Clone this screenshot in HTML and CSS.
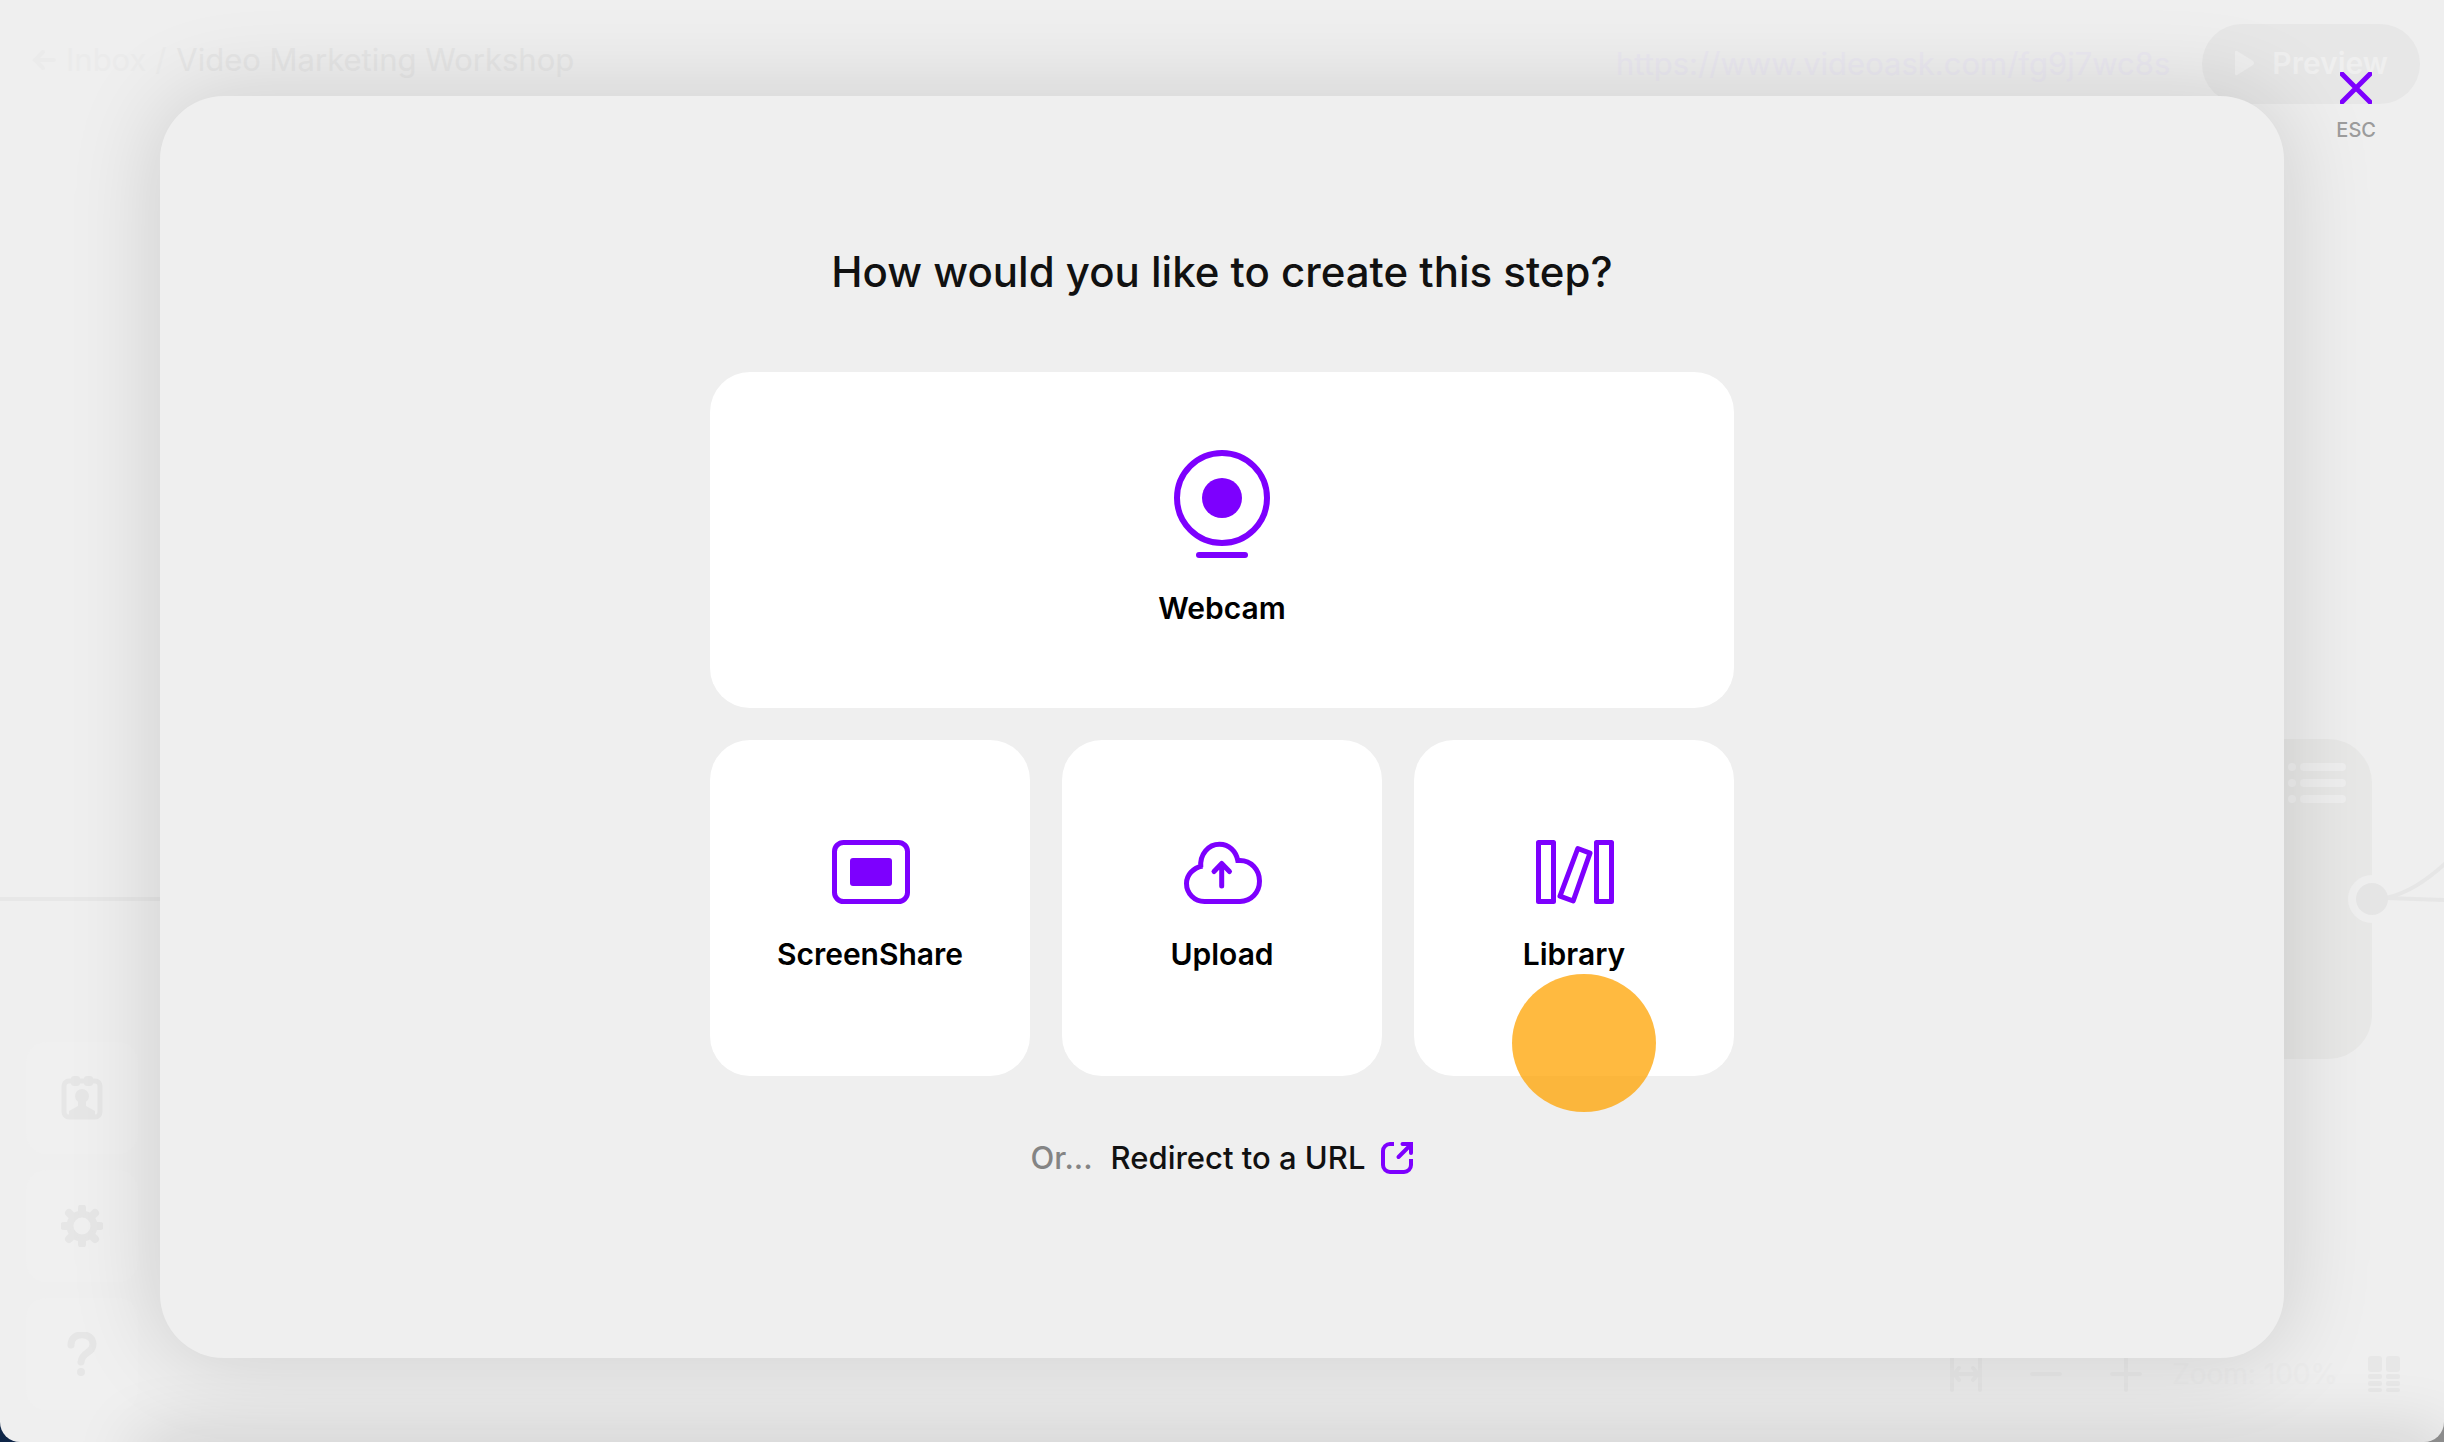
FILE: index.html
```html
<!DOCTYPE html>
<html lang="en">
<head>
    <meta charset="UTF-8">
    <meta name="viewport" content="width=device-width, initial-scale=1.0">
    <title>Video Marketing Workshop</title>
    <link rel="stylesheet" href="styles.css">
</head>
<body>
<div class="window">

    <div class="app">
        <div class="canvas">
            <svg class="wire left" width="160" height="4"><rect width="160" height="4"/></svg>
            <div class="node">
                <svg class="node-list" width="60" height="40" viewBox="0 0 60 40">
                    <circle cx="4" cy="4" r="4"/><rect x="12" y="0" width="46" height="8" rx="4"/>
                    <circle cx="4" cy="20" r="4"/><rect x="12" y="16" width="46" height="8" rx="4"/>
                    <circle cx="4" cy="36" r="4"/><rect x="12" y="32" width="46" height="8" rx="4"/>
                </svg>
            </div>
            <svg class="wire right" width="96" height="80" viewBox="0 0 96 80">
                <circle cx="24" cy="40" r="24" fill="#efefef"/>
                <path d="M38 39C60 34 78 22 100 2M38 39L96 41" fill="none" stroke="#e6e6e6" stroke-width="4"/>
                <circle cx="24" cy="40" r="16" fill="#e5e5e5"/>
            </svg>
        </div>

        <header class="topbar">
            <nav class="crumbs">
                <a href="#inbox" class="back">
                    <svg width="24" height="20" viewBox="0 0 24 20"><path d="M22 10H3M11 2L3 10l8 8"/></svg>
                    Inbox /
                </a>
                <span class="crumb-title">Video Marketing Workshop</span>
            </nav>
            <div class="share">
                <a href="#share" class="share-link">https://www.videoask.com/fg9j7wc8s</a>
                <button class="preview" type="button">
                    <svg width="20" height="26" viewBox="0 0 20 26"><path d="M1 2Q1 0 3 1L19 11Q21 13 19 15L3 25Q1 26 1 24Z"/></svg>
                    Preview
                </button>
            </div>
        </header>

        <div class="bottom">
            <div class="side">
                <button class="tile" type="button" aria-label="Contacts">
                    <svg width="42" height="44" viewBox="0 0 42 44">
                        <rect x="3" y="5" width="36" height="36" rx="5" fill="none" stroke="#e6e6e6" stroke-width="5"/>
                        <rect x="10" y="0" width="9" height="10" rx="3"/><rect x="23" y="0" width="9" height="10" rx="3"/>
                        <circle cx="21" cy="20" r="7"/><path d="M17 24h8v6l9 5v6H8v-6l9-5z"/>
                    </svg>
                </button>
                <button class="tile" type="button" aria-label="Settings">
                    <svg width="42" height="42" viewBox="0 0 42 42">
                        <circle cx="21" cy="21" r="12" fill="none" stroke="#e6e6e6" stroke-width="7"/>
                        <path d="M21 3v5M21 34v5M3 21h5M34 21h5M8 8l4 4M30 30l4 4M8 34l4-4M30 12l4-4" stroke="#e6e6e6" stroke-width="8" stroke-linecap="round" stroke-linejoin="round"/>
                    </svg>
                </button>
                <button class="tile" type="button" aria-label="Help">
                    <svg width="30" height="44" viewBox="0 0 30 44">
                        <path d="M4 13C4 -1 26 0 26 12C26 22 15 19 14 30" fill="none" stroke="#e6e6e6" stroke-width="7" stroke-linecap="round"/>
                        <circle cx="14" cy="40" r="4"/>
                    </svg>
                </button>
            </div>
            <div class="zoombar">
                <button type="button" aria-label="Fit">
                    <svg width="32" height="36" viewBox="0 0 32 36"><path d="M2 2v32M30 2v32M4 18h24M9 12l-5 6 5 6M23 12l5 6-5 6"/></svg>
                </button>
                <button type="button" aria-label="Zoom out">
                    <svg width="32" height="36" viewBox="0 0 32 36"><path d="M2 18h28"/></svg>
                </button>
                <button type="button" aria-label="Zoom in">
                    <svg width="32" height="36" viewBox="0 0 32 36"><path d="M2 18h28M16 2v32"/></svg>
                </button>
                <span class="zoom-value">Zoom: 100%</span>
                <button type="button" aria-label="Layout">
                    <svg class="solid" width="32" height="36" viewBox="0 0 32 36">
                        <rect x="0" y="0" width="14" height="16" rx="3"/><rect x="18" y="0" width="14" height="16" rx="3"/>
                        <rect x="0" y="18" width="14" height="5" rx="2"/><rect x="18" y="18" width="14" height="5" rx="2"/>
                        <rect x="0" y="25" width="14" height="5" rx="2"/><rect x="18" y="25" width="14" height="5" rx="2"/>
                        <rect x="0" y="32" width="14" height="4" rx="2"/><rect x="18" y="32" width="14" height="4" rx="2"/>
                    </svg>
                </button>
            </div>
        </div>
        <div class="edge-shadow"></div>
    </div>

    <div class="overlay">
        <main class="modal" role="dialog" aria-labelledby="modal-title">
            <h1 id="modal-title">How would you like to create this step?</h1>

            <div class="options">
                <button class="option wide" type="button">
                    <svg width="96" height="108" viewBox="0 0 96 108">
                        <circle cx="48" cy="48" r="45" fill="none" stroke="#7d00fe" stroke-width="6"/>
                        <circle cx="48" cy="48" r="20" fill="#7d00fe"/>
                        <path d="M25 105h46" stroke="#7d00fe" stroke-width="6" stroke-linecap="round"/>
                    </svg>
                    Webcam
                </button>
                <button class="option" type="button">
                    <svg width="80" height="64" viewBox="0 0 80 64">
                        <rect x="4.5" y="2.5" width="73" height="59" rx="9" fill="none" stroke="#7d00fe" stroke-width="5"/>
                        <rect x="20" y="18" width="42" height="28" rx="3" fill="#7d00fe"/>
                    </svg>
                    ScreenShare
                </button>
                <button class="option" type="button">
                    <svg width="80" height="64" viewBox="0 0 80 64" fill="none" stroke="#7d00fe" stroke-width="5">
                        <path d="M20.5 26C11 28 4.5 35 4.5 43.5C4.5 53.5 12.5 61.5 22.5 61.5H58C69 61.5 77.5 52.5 77.5 41S69 20.5 58 20.5H55.8C54 11 47 4.2 37.5 4.2C26.5 4.2 17.5 14 18.8 27.5"/>
                        <path d="M39.7 46V23.5M32 31.5L39.7 23.5L47.5 31.5" stroke-linecap="round" stroke-linejoin="round"/>
                    </svg>
                    Upload
                </button>
                <button class="option library" type="button">
                    <svg width="80" height="64" viewBox="0 0 80 64" fill="none" stroke="#7d00fe" stroke-width="5" stroke-linejoin="round">
                        <rect x="4.5" y="2.5" width="15" height="59"/>
                        <path d="M43.8 8.5L56 13.2L39.2 61L26 56.2Z"/>
                        <rect x="62.5" y="2.5" width="15" height="59"/>
                    </svg>
                    Library
                    <span class="pointer"></span>
                </button>
            </div>

            <p class="redirect">
                <span class="or">Or...</span>
                <a href="#redirect">
                    Redirect to a URL
                    <svg width="32" height="32" viewBox="0 0 32 32" fill="none" stroke="#7d00fe" stroke-width="4">
                        <path d="M13 2H9a7 7 0 0 0-7 7v14a7 7 0 0 0 7 7h14a7 7 0 0 0 7-7v-6"/>
                        <path d="M17.5 15L29 3.5M21.5 2H30V11" stroke-linecap="round"/>
                    </svg>
                </a>
            </p>
        </main>

        <button class="close" type="button">
            <svg width="32" height="32" viewBox="0 0 32 32"><path d="M2 2l28 28M30 2L2 30"/></svg>
            ESC
        </button>
    </div>

</div>
</body>
</html>
```

FILE: styles.css
```css
*{
    box-sizing: border-box;
}
body{
    margin: 0;
    background: linear-gradient(90deg, #0e2547 0%, #8c8c8c 100%);
    font-family: Inter, "Liberation Sans", sans-serif;
}
button{
    border: 0;
    padding: 0;
    background: none;
    font: inherit;
    color: inherit;
    cursor: pointer;
}
a{
    color: inherit;
    text-decoration: none;
}
svg{
    display: block;
    flex: none;
}

.window{
    position: relative;
    min-height: 100vh;
    display: grid;
    overflow: hidden;
    border-radius: 0 0 20px 20px;
    background: #efefef;
}
.app, .overlay{
    grid-area: 1 / 1;
}

/* editor behind the dialog */
.app{
    position: relative;
    display: flex;
    flex-direction: column;
    justify-content: space-between;
}
.topbar{
    display: flex;
    justify-content: space-between;
    align-items: flex-start;
    padding: 24px 24px 0 32px;
    font-size: 31px;
    line-height: 40px;
}
.crumbs{
    display: flex;
    align-items: center;
    gap: 10px;
    padding-top: 16px;
    color: #e6e6e6;
}
.back{
    display: flex;
    align-items: center;
    gap: 10px;
    color: #ebebeb;
}
.back svg{
    fill: none;
    stroke: #ebebeb;
    stroke-width: 4;
    stroke-linecap: round;
}
.share{
    display: flex;
    align-items: center;
    gap: 32px;
}
.share-link{
    color: #ebe9f1;
}
.preview{
    display: flex;
    align-items: center;
    gap: 18px;
    height: 80px;
    padding: 0 32px 2px;
    border-radius: 40px;
    background: #e7e7e7;
    color: #efefef;
    font-size: 30px;
    font-weight: 600;
}
.preview svg{
    fill: #efefef;
}
.bottom{
    display: flex;
    justify-content: space-between;
    align-items: flex-end;
    padding: 0 44px 32px 26px;
}
.side{
    display: flex;
    flex-direction: column;
    gap: 16px;
}
.tile{
    display: grid;
    place-items: center;
    width: 112px;
    height: 112px;
    border-radius: 20px;
    background: #f0f0f0;
}
.tile svg{
    fill: #e6e6e6;
}
.zoombar{
    display: flex;
    align-items: center;
    gap: 48px;
    margin-bottom: 18px;
}
.zoombar svg{
    fill: none;
    stroke: #e9e9e9;
    stroke-width: 4;
    stroke-linecap: round;
    stroke-linejoin: round;
}
.zoombar .solid{
    fill: #e7e7e7;
    stroke: none;
}
.zoom-value{
    margin: 0 -18px;
    font-size: 28px;
    line-height: 32px;
    color: #ececec;
}
.canvas{
    position: absolute;
    inset: 0;
}
.wire{
    position: absolute;
}
.wire.left{
    left: 0;
    top: 897px;
    fill: #e7e7e7;
}
.wire.right{
    right: 0;
    top: 859px;
}
.node{
    position: absolute;
    right: 72px;
    top: 739px;
    width: 320px;
    height: 320px;
    border-radius: 44px;
    background: #e8e8e7;
}
.node-list{
    position: absolute;
    right: 24px;
    top: 24px;
    fill: #efefef;
}
.edge-shadow{
    position: absolute;
    left: 140px;
    right: 0;
    bottom: -40px;
    height: 40px;
    box-shadow: 0 0 70px rgba(0, 0, 0, 0.2);
}

/* dialog */
.overlay{
    position: relative;
    padding: 96px 160px 84px;
    display: grid;
}
.modal{
    display: flex;
    flex-direction: column;
    align-items: center;
    padding: 152px 48px;
    border-radius: 64px;
    background: #efefef;
    box-shadow: 0 0 92px rgba(0, 0, 0, 0.15);
    color: #111;
}
h1{
    margin: 0 0 76px;
    font-size: 42px;
    font-weight: 550;
    line-height: 48px;
}
.options{
    display: grid;
    grid-template-columns: repeat(3, 1fr);
    gap: 32px;
    width: 100%;
    max-width: 1024px;
}
.option{
    position: relative;
    display: flex;
    flex-direction: column;
    align-items: center;
    justify-content: center;
    gap: 30px;
    height: 336px;
    padding-bottom: 2px;
    border-radius: 40px;
    background: #fff;
    color: #000;
    font-size: 30px;
    font-weight: 600;
    line-height: 40px;
}
.option.wide{
    grid-column: 1 / -1;
}
.pointer{
    position: absolute;
    left: 98px;
    top: 234px;
    width: 144px;
    height: 138px;
    border-radius: 50%;
    background: rgba(255, 163, 0, 0.75);
}
.redirect{
    display: flex;
    gap: 18px;
    margin: 62px 0 0;
    font-size: 31px;
    font-weight: 550;
    line-height: 40px;
}
.redirect a{
    display: flex;
    align-items: center;
    gap: 16px;
}
.or{
    color: #848484;
    font-weight: 500;
}
.close{
    position: absolute;
    right: 68px;
    top: 72px;
    display: flex;
    flex-direction: column;
    align-items: center;
    gap: 14px;
    font-size: 20px;
    font-weight: 500;
    line-height: 24px;
    color: #9b9b9b;
}
.close svg{
    fill: none;
    stroke: #7d00fe;
    stroke-width: 5;
    stroke-linecap: round;
}
```
